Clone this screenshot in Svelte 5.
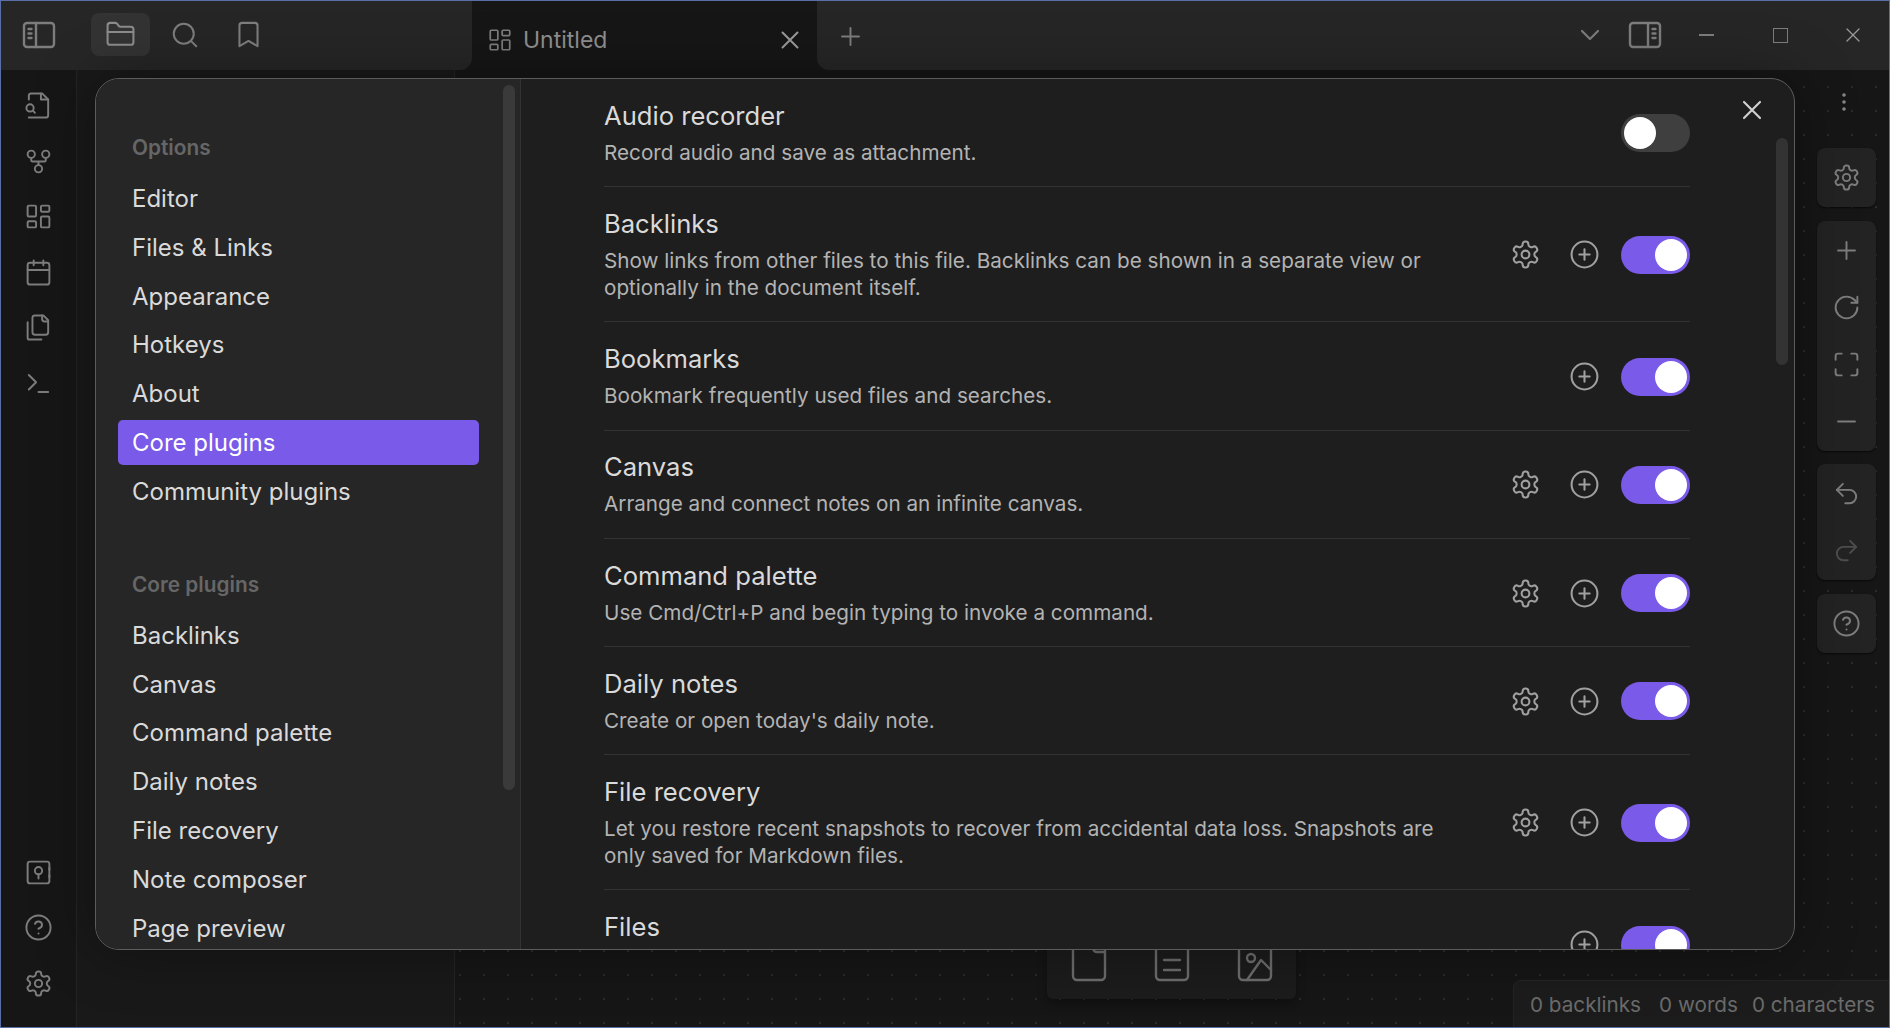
<script>
	const options = ['Editor', 'Files & Links', 'Appearance', 'Hotkeys', 'About', 'Core plugins', 'Community plugins'];
	const corePlugins = ['Backlinks', 'Canvas', 'Command palette', 'Daily notes', 'File recovery', 'Note composer', 'Page preview'];

	const plugins = [
		{ name: 'Audio recorder', desc: 'Record audio and save as attachment.', gear: false, plus: false, on: false },
		{ name: 'Backlinks', desc: 'Show links from other files to this file. Backlinks can be shown in a separate view or optionally in the document itself.', gear: true, plus: true, on: true },
		{ name: 'Bookmarks', desc: 'Bookmark frequently used files and searches.', gear: false, plus: true, on: true },
		{ name: 'Canvas', desc: 'Arrange and connect notes on an infinite canvas.', gear: true, plus: true, on: true },
		{ name: 'Command palette', desc: 'Use Cmd/Ctrl+P and begin typing to invoke a command.', gear: true, plus: true, on: true },
		{ name: 'Daily notes', desc: "Create or open today's daily note.", gear: true, plus: true, on: true },
		{ name: 'File recovery', desc: 'Let you restore recent snapshots to recover from accidental data loss. Snapshots are only saved for Markdown files.', gear: true, plus: true, on: true },
		{ name: 'Files', desc: '', gear: false, plus: true, on: true }
	];

	const topIcons = ['fileSearch', 'fork', 'dashboard', 'calendar', 'files', 'terminal'];
	const bottomIcons = ['vault', 'help', 'gear'];
</script>

{#snippet icon(name, cls = '')}
	<svg class="icon {cls}" viewBox="0 0 24 24" fill="none" stroke="currentColor" stroke-linecap="round" stroke-linejoin="round">
		{#if name === 'gear'}
			<path d="M12.22 2h-.44a2 2 0 0 0-2 2v.18a2 2 0 0 1-1 1.73l-.43.25a2 2 0 0 1-2 0l-.15-.08a2 2 0 0 0-2.73.73l-.22.38a2 2 0 0 0 .73 2.73l.15.1a2 2 0 0 1 1 1.72v.51a2 2 0 0 1-1 1.74l-.15.09a2 2 0 0 0-.73 2.73l.22.38a2 2 0 0 0 2.73.73l.15-.08a2 2 0 0 1 2 0l.43.25a2 2 0 0 1 1 1.73V20a2 2 0 0 0 2 2h.44a2 2 0 0 0 2-2v-.18a2 2 0 0 1 1-1.73l.43-.25a2 2 0 0 1 2 0l.15.08a2 2 0 0 0 2.73-.73l.22-.39a2 2 0 0 0-.73-2.73l-.15-.08a2 2 0 0 1-1-1.74v-.5a2 2 0 0 1 1-1.74l.15-.09a2 2 0 0 0 .73-2.73l-.22-.38a2 2 0 0 0-2.73-.73l-.15.08a2 2 0 0 1-2 0l-.43-.25a2 2 0 0 1-1-1.73V4a2 2 0 0 0-2-2z" />
			<circle cx="12" cy="12" r="3" />
		{:else if name === 'plusCircle'}
			<circle cx="12" cy="12" r="10" /><path d="M8 12h8M12 8v8" />
		{:else if name === 'sidebarLeft'}
			<rect x="2" y="4" width="20" height="16" rx="2" /><path d="M10 4v16M5 8h2M5 11h2M5 14h2" />
		{:else if name === 'sidebarRight'}
			<rect x="2" y="4" width="20" height="16" rx="2" /><path d="M14 4v16M17 8h2M17 11h2M17 14h2" />
		{:else if name === 'folder'}
			<path d="M20 20a2 2 0 0 0 2-2V8a2 2 0 0 0-2-2h-7.9a2 2 0 0 1-1.69-.9L9.6 3.9A2 2 0 0 0 7.93 3H4a2 2 0 0 0-2 2v13a2 2 0 0 0 2 2Z" /><path d="M2 10h20" />
		{:else if name === 'search'}
			<circle cx="11" cy="11" r="8" /><path d="m21 21-4.3-4.3" />
		{:else if name === 'bookmark'}
			<path d="m19 21-7-4-7 4V5a2 2 0 0 1 2-2h10a2 2 0 0 1 2 2v16z" />
		{:else if name === 'fileSearch'}
			<path d="M4 22h14a2 2 0 0 0 2-2V7l-5-5H6a2 2 0 0 0-2 2v3" /><path d="M14 2v5h6" /><circle cx="5" cy="14" r="3" /><path d="m9 18-1.5-1.5" />
		{:else if name === 'fork'}
			<circle cx="12" cy="18" r="3" /><circle cx="6" cy="6" r="3" /><circle cx="18" cy="6" r="3" /><path d="M18 9v2c0 .6-.4 1-1 1H7c-.6 0-1-.4-1-1V9M12 12v3" />
		{:else if name === 'dashboard'}
			<rect x="3" y="3" width="7" height="9" rx="1" /><rect x="14" y="3" width="7" height="5" rx="1" /><rect x="14" y="12" width="7" height="9" rx="1" /><rect x="3" y="16" width="7" height="5" rx="1" />
		{:else if name === 'calendar'}
			<path d="M8 2v4M16 2v4" /><rect x="3" y="4" width="18" height="18" rx="2" /><path d="M3 10h18" />
		{:else if name === 'files'}
			<path d="M20 7h-3a2 2 0 0 1-2-2V2" /><path d="M9 18a2 2 0 0 1-2-2V4a2 2 0 0 1 2-2h7l4 4v10a2 2 0 0 1-2 2Z" /><path d="M3 7.6v12.8A1.6 1.6 0 0 0 4.6 22h9.8" />
		{:else if name === 'terminal'}
			<path d="m4 17 6-6-6-6" /><path d="M12 19h8" />
		{:else if name === 'vault'}
			<rect x="3" y="3" width="18" height="18" rx="2" /><circle cx="12" cy="10.5" r="3" /><path d="M12 13.5V17M21 8v2M21 14v2" />
		{:else if name === 'help'}
			<circle cx="12" cy="12" r="10" /><path d="M9.09 9a3 3 0 0 1 5.83 1c0 2-3 3-3 3" /><path d="M12 17h.01" />
		{:else if name === 'x'}
			<path d="M18 6 6 18M6 6l12 12" />
		{:else if name === 'plus'}
			<path d="M5 12h14M12 5v14" />
		{:else if name === 'minus'}
			<path d="M5 12h14" />
		{:else if name === 'chevron'}
			<path d="m6 9 6 6 6-6" />
		{:else if name === 'more'}
			<circle cx="12" cy="5" r="1" /><circle cx="12" cy="12" r="1" /><circle cx="12" cy="19" r="1" />
		{:else if name === 'rotate'}
			<path d="M21 12a9 9 0 1 1-9-9c2.52 0 4.93 1 6.74 2.74L21 8" /><path d="M21 3v5h-5" />
		{:else if name === 'maximize'}
			<path d="M8 3H5a2 2 0 0 0-2 2v3M21 8V5a2 2 0 0 0-2-2h-3M3 16v3a2 2 0 0 0 2 2h3M16 21h3a2 2 0 0 0 2-2v-3" />
		{:else if name === 'undo'}
			<path d="M9 14 4 9l5-5" /><path d="M4 9h10.5a5.5 5.5 0 0 1 5.5 5.5a5.5 5.5 0 0 1-5.5 5.5H11" />
		{:else if name === 'redo'}
			<path d="m15 14 5-5-5-5" /><path d="M20 9H9.5A5.5 5.5 0 0 0 4 14.5A5.5 5.5 0 0 0 9.5 20H13" />
		{:else if name === 'file'}
			<path d="M15 2H6a2 2 0 0 0-2 2v16a2 2 0 0 0 2 2h12a2 2 0 0 0 2-2V7Z" /><path d="M14 2v4a2 2 0 0 0 2 2h4" />
		{:else if name === 'clipboard'}
			<rect x="8" y="2" width="8" height="4" rx="1" /><path d="M16 4h2a2 2 0 0 1 2 2v14a2 2 0 0 1-2 2H6a2 2 0 0 1-2-2V6a2 2 0 0 1 2-2h2" /><path d="M8 12h8M8 17h8" />
		{:else if name === 'image'}
			<rect x="4" y="2" width="16" height="20" rx="2" /><circle cx="10" cy="11" r="2" /><path d="m8 22 7-10 5 5" />
		{/if}
	</svg>
{/snippet}

<div class="app">
	<header class="titlebar">
		<div class="bar-left">
			<button class="tb sidebar-toggle">{@render icon('sidebarLeft', 'i36')}</button>
			<button class="tb folder active">{@render icon('folder', 'i31')}</button>
			<button class="tb">{@render icon('search', 'i30')}</button>
			<button class="tb">{@render icon('bookmark', 'i31')}</button>
		</div>
		<div class="tab">
			{@render icon('dashboard', 'i26')}
			<span class="tab-title">Untitled</span>
			<span class="tab-close">{@render icon('x', 'i30')}</span>
		</div>
		<div class="bar-right">
			<span class="new-tab">{@render icon('plus', 'i29')}</span>
			<span class="spacer"></span>
			<span class="chevron">{@render icon('chevron', 'i32')}</span>
			<span class="right-toggle">{@render icon('sidebarRight', 'i36')}</span>
			<span class="win-min"></span>
			<span class="win-max"></span>
			<span class="win-close">{@render icon('x', 'i24 thin')}</span>
		</div>
	</header>

	<div class="body">
		<nav class="ribbon">
			<div class="ribbon-group">
				{#each topIcons as name}
					<span class="ribbon-icon">{@render icon(name, 'i29')}</span>
				{/each}
			</div>
			<div class="ribbon-group">
				{#each bottomIcons as name}
					<span class="ribbon-icon">{@render icon(name, 'i29')}</span>
				{/each}
			</div>
		</nav>
		<aside class="left-pane"></aside>
		<main class="canvas">
			<div class="tools">
				<span class="more">{@render icon('more', 'i24')}</span>
				<div class="tool-box">{@render icon('gear', 'i29')}</div>
				<div class="tool-box">
					{@render icon('plus', 'i29')}
					{@render icon('rotate', 'i29')}
					{@render icon('maximize', 'i29')}
					{@render icon('minus', 'i29')}
				</div>
				<div class="tool-box">
					{@render icon('undo', 'i29')}
					<span class="dim">{@render icon('redo', 'i29')}</span>
				</div>
				<div class="tool-box">{@render icon('help', 'i29')}</div>
			</div>
			<div class="create-card">
				{@render icon('file', 'i48')}
				{@render icon('clipboard', 'i48')}
				{@render icon('image', 'i48')}
			</div>
			<footer class="status">
				<span>0 backlinks</span>
				<span>0 words</span>
				<span class="chars">0 characters</span>
			</footer>
		</main>
	</div>

	<div class="modal">
		<aside class="settings-nav">
			<div class="nav-heading">Options</div>
			{#each options as item}
				<div class="nav-item" class:selected={item === 'Core plugins'}>{item}</div>
			{/each}
			<div class="nav-heading second">Core plugins</div>
			{#each corePlugins as item}
				<div class="nav-item">{item}</div>
			{/each}
			<span class="scroll-thumb nav-thumb"></span>
		</aside>
		<section class="settings-content">
			{#each plugins as plugin}
				<div class="row">
					<div class="info">
						<div class="name">{plugin.name}</div>
						<div class="desc">{plugin.desc}</div>
					</div>
					<div class="controls">
						{#if plugin.gear}<span class="ctl">{@render icon('gear', 'i31')}</span>{/if}
						{#if plugin.plus}<span class="ctl">{@render icon('plusCircle', 'i31')}</span>{/if}
						<span class="toggle" class:on={plugin.on}><span class="knob"></span></span>
					</div>
				</div>
			{/each}
		</section>
		<span class="scroll-thumb content-thumb"></span>
		<span class="modal-close">{@render icon('x', 'i32')}</span>
	</div>
</div>

<style>
	:global(body) {
		background: #161616;
		font-family: Inter, 'Liberation Sans', sans-serif;
	}
	.app {
		position: relative;
		box-sizing: border-box;
		width: 1890px;
		height: 1028px;
		border: 1px solid #5a6ea8;
		overflow: hidden;
		display: flex;
		flex-direction: column;
		background: #161616;
	}
	.icon {
		display: block;
		flex: none;
		stroke-width: 1.6;
	}
	.thin { stroke-width: 1.3; }
	.i24 { width: 24px; height: 24px; }
	.i26 { width: 26px; height: 26px; }
	.i29 { width: 29px; height: 29px; }
	.i30 { width: 30px; height: 30px; }
	.i31 { width: 31px; height: 31px; }
	.i32 { width: 32px; height: 32px; }
	.i36 { width: 36px; height: 36px; }
	.i48 { width: 48px; height: 48px; stroke-width: 1.2; }

	.titlebar {
		display: flex;
		height: 69px;
		flex: none;
	}
	.bar-left {
		width: 471px;
		flex: none;
		background: #262626;
		border-bottom-right-radius: 12px;
		display: flex;
		align-items: flex-start;
		padding: 12px 0 0 20px;
		box-sizing: border-box;
		color: #7d7d7d;
	}
	.tb {
		all: unset;
		width: 59px;
		height: 43px;
		display: flex;
		align-items: center;
		justify-content: center;
		border-radius: 8px;
		color: inherit;
		margin-right: 5px;
	}
	.sidebar-toggle {
		width: 36px;
		margin-right: 34px;
	}
	.active {
		background: #333333;
		color: #8c8c8c;
	}
	.tab {
		width: 345px;
		flex: none;
		margin-top: 12px;
		box-sizing: border-box;
		padding: 0 12px 3px 15px;
		background: #161616;
		border-radius: 12px 12px 0 0;
		display: flex;
		align-items: center;
		gap: 10px;
		color: #7d7d7d;
	}
	.tab-title {
		flex: 1;
		font-size: 23px;
		color: #8f8f8f;
	}
	.tab-close {
		color: #9a9a9a;
	}
	.bar-right {
		flex: 1;
		background: #262626;
		border-bottom-left-radius: 12px;
		display: flex;
		align-items: center;
		color: #7d7d7d;
		padding-bottom: 1px;
	}
	.new-tab {
		margin: 2px 0 0 19px;
	}
	.spacer {
		flex: 1;
	}
	.chevron {
		margin-right: 21px;
	}
	.right-toggle {
		display: block;
		margin-right: 36px;
	}
	.win-min {
		width: 15px;
		height: 1.5px;
		background: #7d7d7d;
		margin-right: 59px;
	}
	.win-max {
		width: 13px;
		height: 13px;
		border: 1.5px solid #7d7d7d;
		margin-right: 53px;
	}
	.win-close {
		margin-right: 24px;
		color: #9a9a9a;
	}

	.body {
		flex: 1;
		display: flex;
		min-height: 0;
	}
	.ribbon {
		width: 76px;
		flex: none;
		box-sizing: border-box;
		border-right: 1px solid #242424;
		padding: 8px 0 16px;
		display: flex;
		flex-direction: column;
		justify-content: space-between;
		color: #7d7d7d;
	}
	.ribbon-group {
		display: flex;
		flex-direction: column;
		align-items: center;
	}
	.ribbon-icon {
		height: 55.5px;
		display: flex;
		align-items: center;
		margin-right: 1px;
	}
	.left-pane {
		width: 378px;
		flex: none;
		box-sizing: border-box;
		background: #191919;
		border-right: 1px solid #242424;
	}
	.canvas {
		position: relative;
		flex: 1;
		background-color: #161616;
		background-image: radial-gradient(circle at 1px 1px, #2b2b2b 1px, transparent 1.5px);
		background-size: 24px 24px;
		background-position: 4px 16px;
	}
	.tools {
		position: absolute;
		right: 13px;
		top: 12px;
		width: 59px;
		display: flex;
		flex-direction: column;
		align-items: center;
		gap: 13.5px;
		color: #7d7d7d;
	}
	.more {
		height: 55px;
		margin-bottom: -2.5px;
		display: flex;
		align-items: flex-start;
		margin-left: -5px;
		color: #8a8a8a;
		padding-top: 8px;
		box-sizing: border-box;
	}
	.tool-box {
		width: 59px;
		box-sizing: border-box;
		background: #232323;
		border-radius: 8px;
		box-shadow: 0 1px 2px rgba(0, 0, 0, 0.6);
		display: flex;
		flex-direction: column;
		align-items: center;
		padding: 15px 0;
		gap: 28px;
	}
	.dim {
		color: #4e4e4e;
	}
	.create-card {
		position: absolute;
		left: 592px;
		top: 850px;
		width: 249px;
		height: 79px;
		box-sizing: border-box;
		padding-top: 16px;
		background: #1c1c1c;
		border-radius: 6px;
		box-shadow: 0 4px 10px rgba(0, 0, 0, 0.3);
		display: flex;
		justify-content: center;
		gap: 35px;
		color: #6d6d6d;
	}
	.status {
		position: absolute;
		right: 0;
		bottom: 0;
		left: 1058px;
		height: 47px;
		box-sizing: border-box;
		background: #1c1c1c;
		border-top: 1px solid #242424;
		border-left: 1px solid #242424;
		border-top-left-radius: 8px;
		display: flex;
		align-items: center;
		gap: 18px;
		padding-left: 16px;
		font-size: 20.7px;
		color: #6b6b6b;
		white-space: nowrap;
	}
	.chars {
		margin-left: -4px;
	}

	.modal {
		position: absolute;
		left: 94px;
		top: 77px;
		width: 1700px;
		height: 872px;
		box-sizing: border-box;
		display: flex;
		background: #1e1e1e;
		border: 1px solid #5c5c5c;
		border-radius: 24px;
		overflow: hidden;
		box-shadow: 0 0 60px rgba(0, 0, 0, 0.35);
	}
	.settings-nav {
		position: relative;
		width: 425px;
		flex: none;
		box-sizing: border-box;
		background: #262626;
		border-right: 1px solid #333333;
		padding: 54px 34px 0 22px;
		overflow: hidden;
	}
	.nav-heading {
		height: 30px;
		line-height: 30px;
		margin: 0 0 13px 14px;
		font-size: 20.8px;
		font-weight: 600;
		color: #666666;
	}
	.nav-heading.second {
		margin-top: 56px;
	}
	.nav-item {
		height: 45px;
		line-height: 45px;
		margin-bottom: 3.8px;
		padding-left: 14px;
		width: 361px;
		box-sizing: border-box;
		border-radius: 5px;
		font-size: 24px;
		color: #dadada;
		white-space: nowrap;
	}
	.selected {
		color: #ffffff;
		background: #7a5ae8;
	}
	.scroll-thumb {
		position: absolute;
		width: 12px;
		background: #3a3a3a;
		border-radius: 6px;
	}
	.nav-thumb {
		left: 407px;
		top: 6px;
		height: 705px;
	}
	.content-thumb {
		left: 1680px;
		top: 59px;
		height: 227px;
		background: #333333;
	}
	.modal-close {
		position: absolute;
		left: 1640px;
		top: 15px;
		color: #d0d0d0;
	}
	.settings-content {
		flex: 1;
		padding: 0 104px 0 83px;
		overflow: hidden;
	}
	.row {
		display: flex;
		align-items: center;
		box-sizing: border-box;
		padding: 21.8px 0 20.4px;
		border-bottom: 1px solid #333333;
	}
	.info {
		flex: 1;
		max-width: 850px;
	}
	.name {
		font-size: 25.6px;
		line-height: 30px;
		color: #dadada;
		margin-bottom: 8px;
	}
	.desc {
		min-height: 27px;
		font-size: 20.7px;
		line-height: 27px;
		color: #b3b3b3;
	}
	.controls {
		margin-left: auto;
		display: flex;
		align-items: center;
		gap: 28px;
		color: #a0a0a0;
	}
	.ctl {
		display: block;
	}
	.toggle {
		position: relative;
		display: block;
		width: 69px;
		height: 38px;
		margin-left: -6.5px;
		border-radius: 19px;
		background: #3f3f3f;
	}
	.toggle.on {
		background: #7a5ae8;
	}
	.knob {
		position: absolute;
		top: 3px;
		left: 3px;
		width: 32px;
		height: 32px;
		border-radius: 50%;
		background: #ffffff;
	}
	.toggle.on .knob {
		left: 34px;
	}
</style>
